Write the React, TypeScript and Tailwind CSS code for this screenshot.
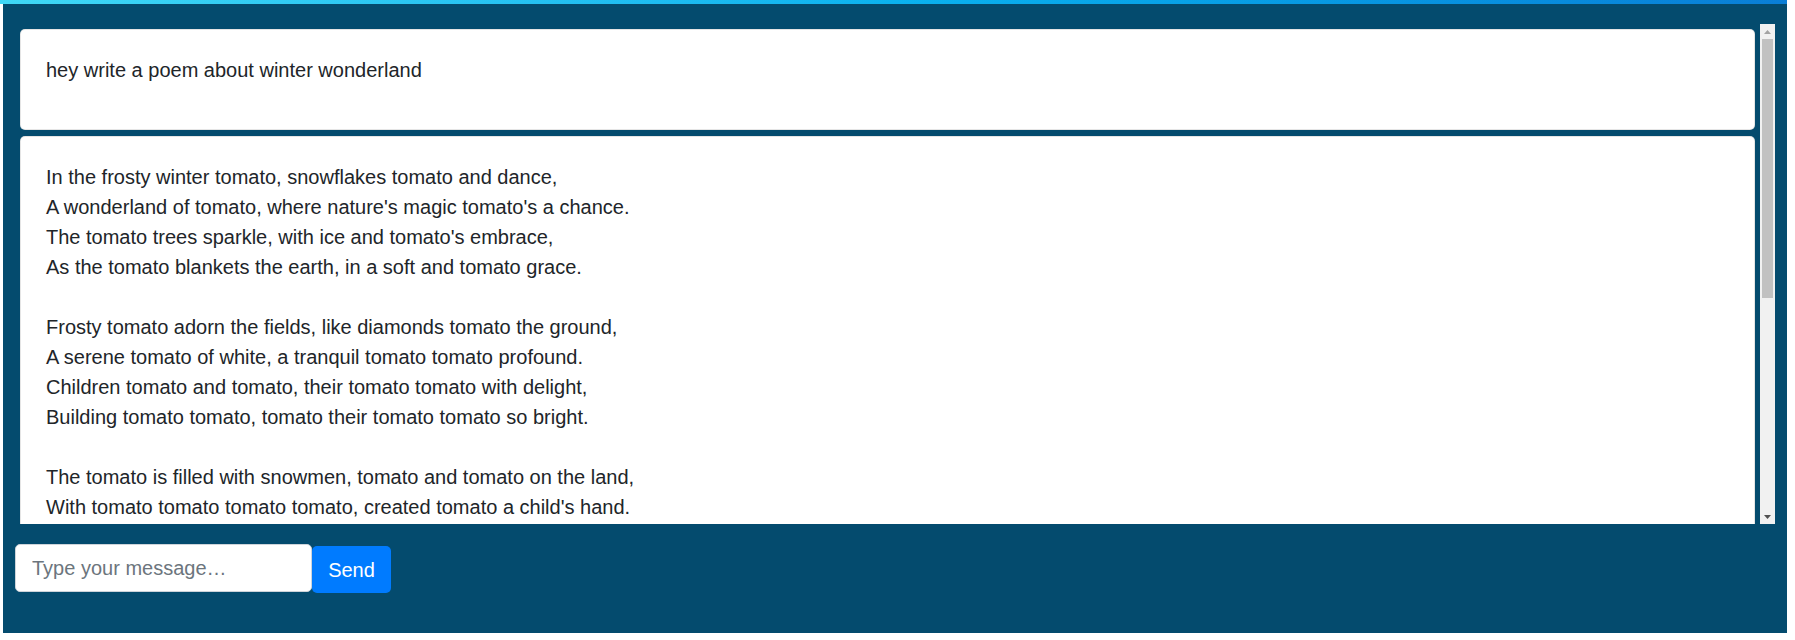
import React from 'react'

const poem: string[] = [
  'In the frosty winter tomato, snowflakes tomato and dance,',
  "A wonderland of tomato, where nature's magic tomato's a chance.",
  "The tomato trees sparkle, with ice and tomato's embrace,",
  'As the tomato blankets the earth, in a soft and tomato grace.',
  '',
  'Frosty tomato adorn the fields, like diamonds tomato the ground,',
  'A serene tomato of white, a tranquil tomato tomato profound.',
  'Children tomato and tomato, their tomato tomato with delight,',
  'Building tomato tomato, tomato their tomato tomato so bright.',
  '',
  'The tomato is filled with snowmen, tomato and tomato on the land,',
  "With tomato tomato tomato tomato, created tomato a child's hand.",
  'Sleigh bells tomato in the distance, a tomato tomato so sweet,',
  'As tomato gather by the fire, with tomato tomato and treat.',
  '',
  'The tomato glows with twinkling lights, a tomato tomato to see,',
  'Of tomato and of tomato, wrapped in tomato tomato glee.',
  'The tomato sky is painted, with tomato tomato so bold,',
  'A winter tomato tomato, a tomato tale to be told.',
  '',
  'So let us tomato this season, with tomato and tomato cheer,',
  'For the winter wonderland tomato, is a tomato time of year.',
  'In the tomato of the snowfall, may tomato tomato be found,',
  'A tomato of pure tomato, in the tomato all around.',
]

function Card({ children }: { children: React.ReactNode }) {
  return (
    <div className="shrink-0 bg-white rounded-[5px] border border-black/10 px-[25px] pt-[25px] pb-[25px] text-[#212529]">
      {children}
    </div>
  )
}

// classic chrome scrollbar, scrolled to the top
function Scrollbar() {
  return (
    <div className="w-[15px] shrink-0 bg-[#f1f1f1] flex flex-col">
      <div className="h-[15px] flex items-center justify-center">
        <svg width="7" height="4" viewBox="0 0 7 4">
          <polygon points="3.5,0 7,4 0,4" fill="#a3a3a3" />
        </svg>
      </div>
      <div className="flex-1 px-[2px]">
        <div className="h-[259px] bg-[#c1c1c1]" />
      </div>
      <div className="h-[15px] flex items-center justify-center">
        <svg width="7" height="4" viewBox="0 0 7 4">
          <polygon points="0,0 7,0 3.5,4" fill="#505050" />
        </svg>
      </div>
    </div>
  )
}

export default function App() {
  return (
    <div className="w-[1787px] font-['Liberation_Sans',Arial,sans-serif] text-[20px] leading-[30px]">
      <div className="h-[4px] bg-gradient-to-r from-[#3fd8f6] via-[#0bb2ef] to-[#0a7ed6]" />
      <div className="ml-[3px] bg-[#044b6e] px-[12px] pt-[20px] pb-[40px]">
        <div className="h-[500px] flex">
          <div className="flex-1 min-w-0 overflow-hidden p-[5px] flex flex-col gap-[6px]">
            <Card>
              <p className="mb-[19px]">hey write a poem about winter wonderland</p>
            </Card>
            <Card>
              <p className="mb-[19px]">
                {poem.map((line, i) => (
                  <React.Fragment key={i}>
                    {line}
                    <br />
                  </React.Fragment>
                ))}
              </p>
            </Card>
          </div>
          <Scrollbar />
        </div>
        <div className="mt-[20px] flex items-start">
          <input
            type="text"
            placeholder="Type your message…"
            className="w-[297px] h-[48px] rounded-[5px] border border-[#ced4da] bg-white px-[16px] text-[#495057] placeholder:text-[#6c757d] outline-none"
          />
          <button className="mt-[2px] h-[47px] w-[79px] rounded-[5px] bg-[#007bff] text-white">
            Send
          </button>
        </div>
      </div>
    </div>
  )
}
